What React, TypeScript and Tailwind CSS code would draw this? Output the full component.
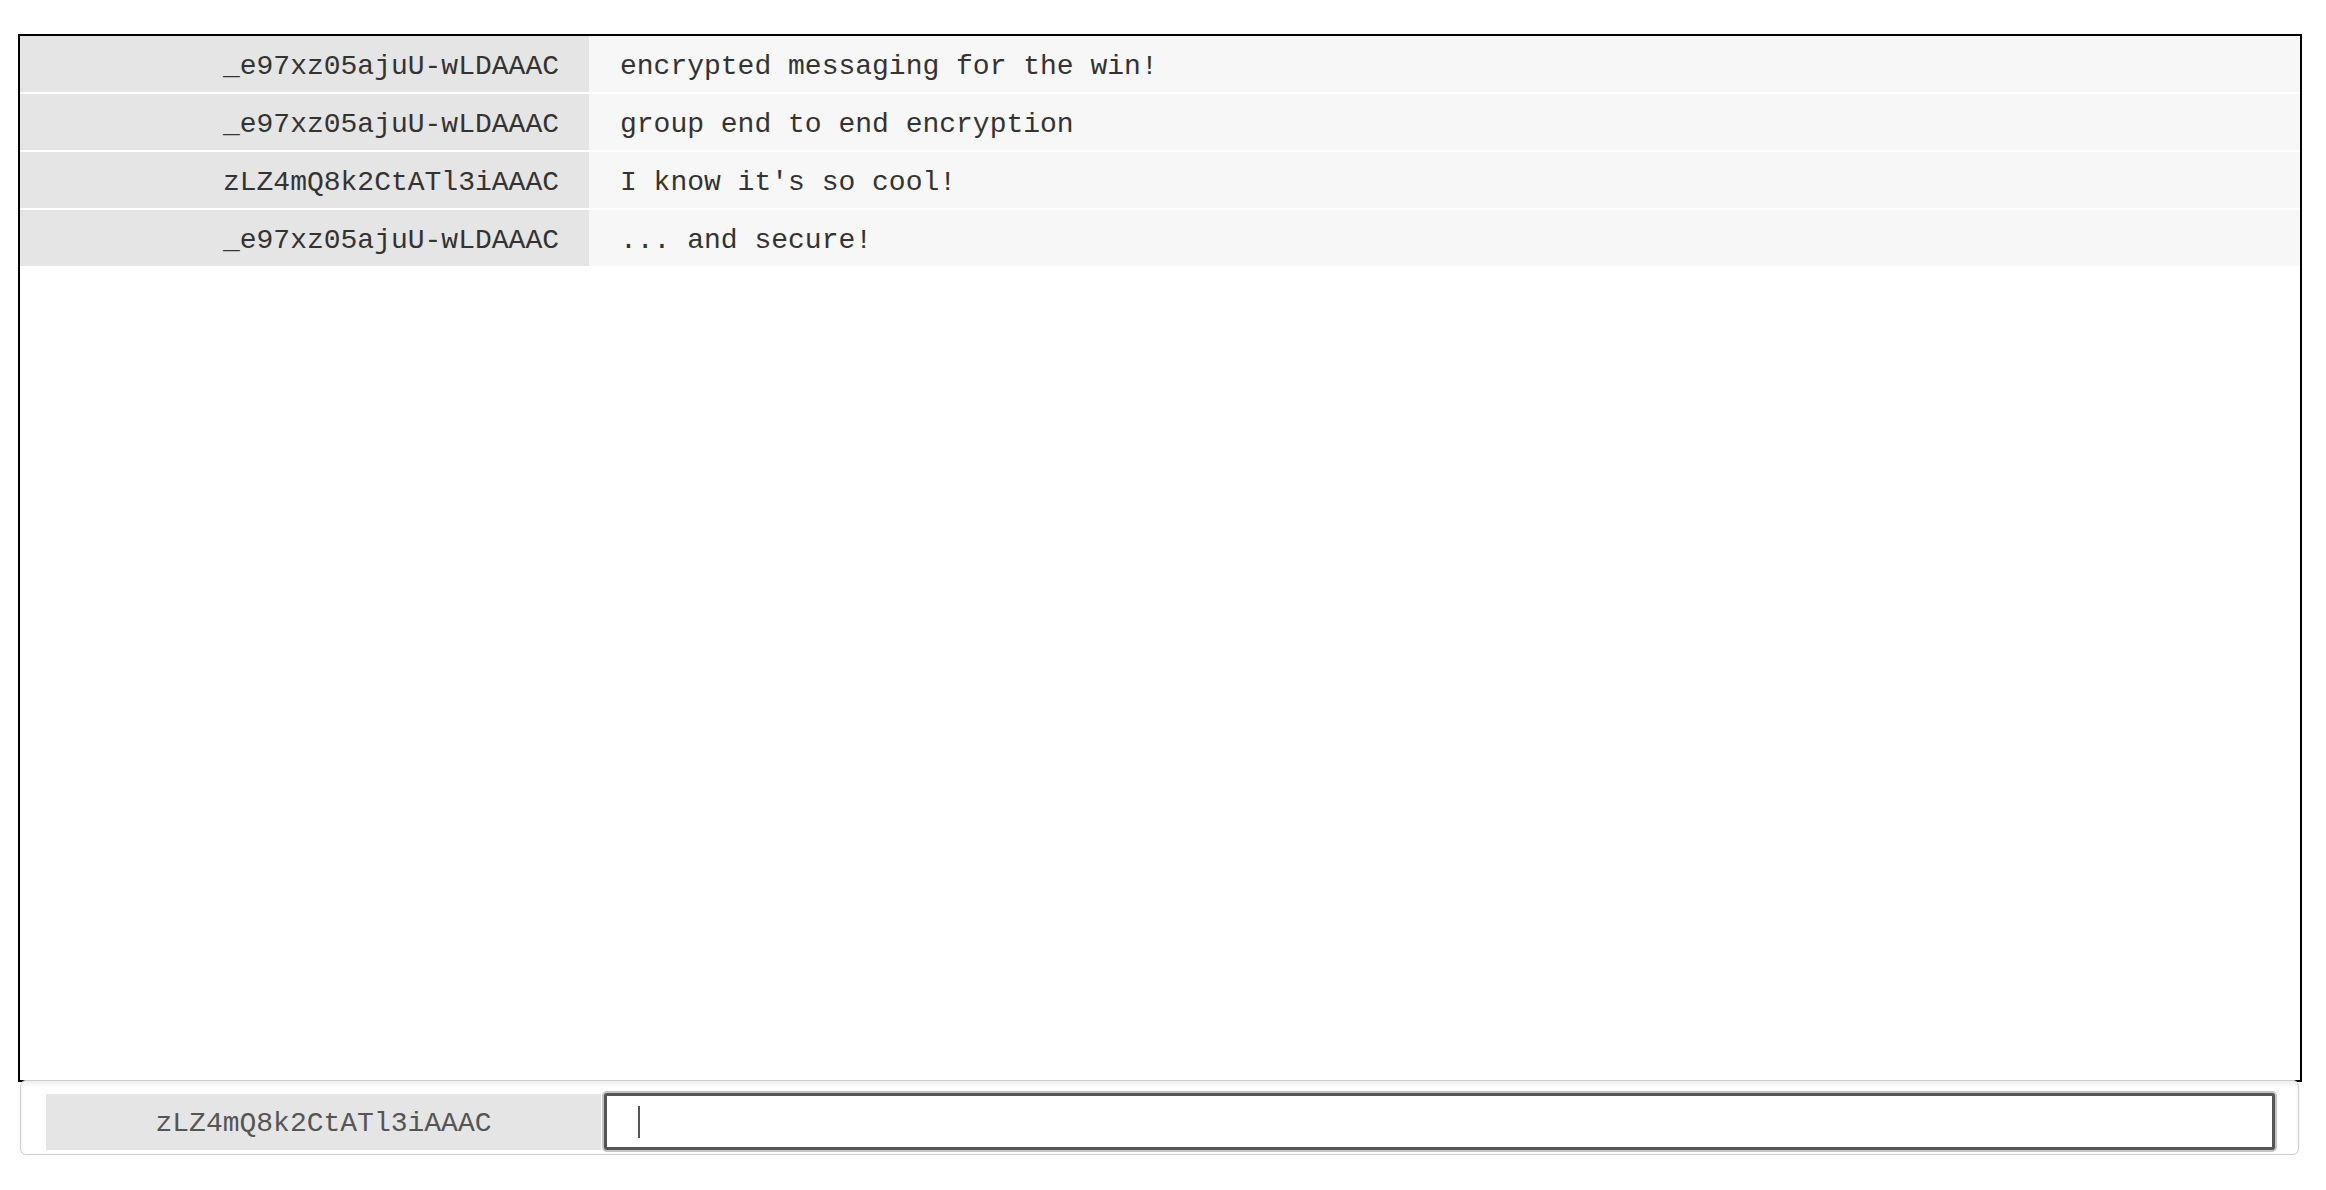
const messages = [
  { from: "_e97xz05ajuU-wLDAAAC", text: "encrypted messaging for the win!" },
  { from: "_e97xz05ajuU-wLDAAAC", text: "group end to end encryption" },
  { from: "zLZ4mQ8k2CtATl3iAAAC", text: "I know it's so cool!" },
  { from: "_e97xz05ajuU-wLDAAAC", text: "... and secure!" },
];

const me = "zLZ4mQ8k2CtATl3iAAAC";

const mono = "font-['Courier_New','Liberation_Mono',monospace]";

export default function App() {
  return (
    <div className={`min-h-[1190px] w-full bg-white pt-[34px] ${mono} text-[28px]`}>
      {/* Message log */}
      <div className="ml-[18px] h-[1048px] w-[2284px] border-2 border-black">
        <div className="flex flex-col gap-[2px]">
          {messages.map((m, i) => (
            <div key={i} className="flex h-[56px] items-center">
              <div className="flex h-full w-[569px] shrink-0 items-center justify-end bg-[#e5e5e5] pr-[30px] pt-[5px] text-[#333]">
                {m.from}
              </div>
              <div className="flex h-full flex-1 items-center bg-[#f7f7f7] pl-[31px] pt-[5px] text-[#333]">
                {m.text}
              </div>
            </div>
          ))}
        </div>
      </div>

      {/* Compose bar */}
      <div className="relative z-10 -mt-[2px] ml-[20px] flex h-[75px] w-[2279px] items-start rounded-[6px] border border-[#cccccc] bg-white pl-[25px] pt-[12px] shadow-[inset_0_4px_4px_rgba(0,0,0,0.06)]">
        <div className="mt-[1px] flex h-[56px] w-[555px] shrink-0 items-center justify-center bg-[#e5e5e5] pt-[4px] text-[#555]">
          {me}
        </div>
        <div className="ml-[3px] flex h-[57px] w-[1671px] items-center rounded-[3px] border-[3px] border-[#555] bg-white pl-[31px] shadow-[0_0_0_2px_#c4c4c4]">
          <span className="block h-[32px] w-[2px] bg-[#555]" />
        </div>
      </div>
    </div>
  );
}
